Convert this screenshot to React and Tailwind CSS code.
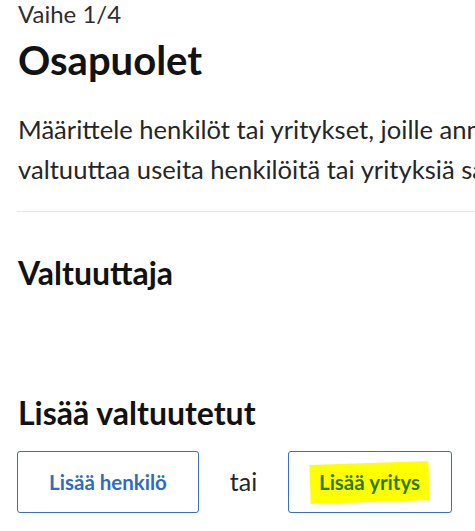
export default function App() {
  return (
    <div className="w-[475px] h-[531px] overflow-hidden bg-white text-[#1f1f1f]" style={{ fontFamily: 'Lato, "Open Sans", sans-serif' }}>
      <div className="w-[760px] pl-[18px]">
        <div className="text-[24px] leading-[28px] text-[#2e2e2e]">Vaihe 1/4</div>
        <h1 className="mt-[10px] text-[40px] leading-[44px] font-bold text-[#121212]">Osapuolet</h1>
        <p className="mt-[27px] text-[25.6px] leading-[40px] text-[#262626] whitespace-nowrap">
          Määrittele henkilöt tai yritykset, joille annat valtuuksia. Voit
          <br />
          valtuuttaa useita henkilöitä tai yrityksiä samalla kertaa.
        </p>
        <div className="mt-[22px] ml-[-1px] h-px bg-[#e6e6e6]" />
        <h2 className="mt-[43px] text-[32px] leading-[36px] font-bold text-[#121212]">Valtuuttaja</h2>
        <h2 className="mt-[104px] text-[32px] leading-[36px] font-bold text-[#121212]">Lisää valtuutetut</h2>
        <div className="mt-[20px] ml-[-1px] flex items-center">
          <button className="w-[182px] h-[62px] rounded-[3px] border border-[#3a70b8] bg-white text-[20.5px] font-bold text-[#2f6cc0]">
            Lisää henkilö
          </button>
          <span className="w-[89px] text-center text-[25px] text-[#262626]">tai</span>
          <button className="w-[164px] h-[62px] rounded-[3px] border border-[#3a70b8] bg-white text-[20.5px] font-bold flex items-center justify-center">
            <span className="inline-block bg-[#ffff00] px-[9px] py-[4px] text-[#2f7a12] -rotate-2">
              <span className="inline-block rotate-2">Lisää yritys</span>
            </span>
          </button>
        </div>
      </div>
    </div>
  );
}
